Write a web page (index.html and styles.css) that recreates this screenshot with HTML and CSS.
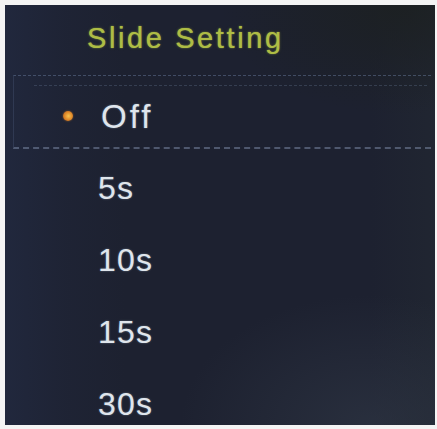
FILE: index.html
```html
<!DOCTYPE html>
<html>
<head>
<meta charset="utf-8">
<link rel="stylesheet" href="styles.css">
</head>
<body>
<div class="screen">
  <div class="title">Slide Setting</div>
  <ul class="list">
    <li class="row sel"><span class="dot"></span><span class="label">Off</span></li>
    <li class="row"><span class="label">5s</span></li>
    <li class="row"><span class="label">10s</span></li>
    <li class="row"><span class="label">15s</span></li>
    <li class="row"><span class="label">30s</span></li>
  </ul>
</div>
</body>
</html>
```
FILE: styles.css
```css
html, body {
  margin: 0;
  padding: 0;
  background: #f4f4f4;
}
body {
  width: 437px;
  height: 429px;
  overflow: hidden;
  font-family: "Liberation Sans", Arial, sans-serif;
}
.screen {
  margin: 5px 2px 4px 5px;
  width: 430px;
  height: 420px;
  overflow: hidden;
  background:
    radial-gradient(ellipse 190px 130px at 85% 100%, rgba(55, 64, 78, 0.45), rgba(55, 64, 78, 0) 100%),
    radial-gradient(ellipse 180px 110px at 92% 0%, rgba(28, 32, 32, 0.85), rgba(28, 32, 32, 0) 100%),
    linear-gradient(to right, rgba(40, 52, 85, 0.35) 0%, rgba(40, 52, 85, 0.12) 14%, rgba(40, 52, 85, 0) 28%),
    linear-gradient(to right, rgba(0,0,0,0) 85%, rgba(40, 48, 52, 0.3) 100%),
    #1d2130;
}
.title {
  padding: 15px 0 0 82px;
  height: 55px;
  box-sizing: border-box;
  font-size: 29px;
  line-height: 36px;
  letter-spacing: 2.6px;
  color: #aebd45;
  text-shadow: 0 0 1px rgba(170, 190, 70, 0.8), 0 0 3px rgba(170, 190, 70, 0.35);
}
.list {
  list-style: none;
  margin: 0;
  padding: 0;
}
.row {
  display: flex;
  align-items: flex-start;
  height: 72px;
  box-sizing: border-box;
  padding: 6px 0 0 93px;
  font-size: 32px;
  line-height: 66px;
  letter-spacing: 1.2px;
  color: #dfe5ec;
  text-shadow: 0 0 2px rgba(200, 215, 235, 0.45);
}
.row.sel {
  position: relative;
  height: 74px;
  margin: 15px 4px 0 8px;
  padding: 10px 0 0 49px;
  line-height: 62px;
  font-size: 33px;
  letter-spacing: 3px;
  border-top: 1px dashed rgba(110, 130, 165, 0.45);
  border-bottom: 2px dashed rgba(140, 155, 185, 0.45);
  border-left: 1px solid rgba(110, 130, 170, 0.2);
}
.row.sel::before {
  content: "";
  position: absolute;
  left: 20px;
  right: 4px;
  top: 9px;
  border-top: 1px dashed rgba(110, 130, 160, 0.3);
}
.dot {
  width: 10px;
  height: 10px;
  border-radius: 50%;
  margin: 25px 28px 0 0;
  flex: none;
  background: radial-gradient(circle at 55% 50%, #f7c450 0%, #e08a2a 50%, #a9521e 100%);
  box-shadow: 0 0 2px rgba(230, 140, 40, 0.6);
}
```
